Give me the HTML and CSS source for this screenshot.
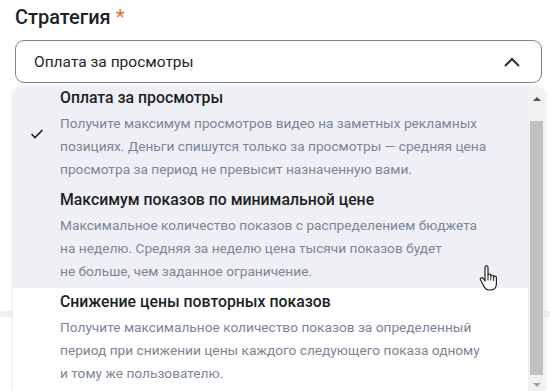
FILE: index.html
```html
<!DOCTYPE html>
<html lang="ru">

<head>
    <meta charset="UTF-8">
    <title>Стратегия</title>
    <link rel="stylesheet" href="styles.css">
</head>

<body>
    <section class="field">
        <h2 class="field-label">Стратегия <span class="required">*</span></h2>
        <div class="select">
            <span class="select-value">Оплата за просмотры</span>
            <svg class="chevron" width="18" height="12" viewBox="0 0 18 12">
                <polyline points="2,10 9,3 16,10" fill="none" stroke="#2b2f36" stroke-width="2" />
            </svg>
        </div>
        <div class="under-bar"></div>
    </section>

    <div class="dropdown">
        <div class="options">
            <div class="option option-selected">
                <div class="option-check">
                    <svg width="14" height="12" viewBox="0 0 14 12">
                        <polyline points="1.5,6 5,9.5 12.5,2" fill="none" stroke="#222" stroke-width="1.6" />
                    </svg>
                </div>
                <div class="option-body">
                    <div class="option-title">Оплата за просмотры</div>
                    <div class="option-desc">Получите максимум просмотров видео на&nbsp;заметных рекламных позициях. Деньги спишутся только за&nbsp;просмотры — средняя цена просмотра за&nbsp;период не&nbsp;превысит назначенную вами.</div>
                </div>
            </div>
            <div class="option option-hover">
                <div class="option-check"></div>
                <div class="option-body">
                    <div class="option-title">Максимум показов по минимальной цене</div>
                    <div class="option-desc">Максимальное количество показов с&nbsp;распределением бюджета на&nbsp;неделю. Средняя за&nbsp;неделю цена тысячи показов будет не&nbsp;больше, чем заданное ограничение.</div>
                </div>
            </div>
            <div class="option">
                <div class="option-check"></div>
                <div class="option-body">
                    <div class="option-title">Снижение цены повторных показов</div>
                    <div class="option-desc">Получите максимальное количество показов за&nbsp;определенный период при снижении цены каждого следующего показа одному и&nbsp;тому&nbsp;же пользователю.</div>
                </div>
            </div>
        </div>
        <div class="scrollbar">
            <span class="arrow arrow-up"></span>
            <div class="thumb"></div>
            <span class="arrow arrow-down"></span>
        </div>
    </div>

    <!-- mouse pointer over the hovered option -->
    <svg class="cursor" width="20" height="26" viewBox="0 0 20 26">
        <path d="M6 2.5c0-1 .7-1.6 1.5-1.6S9 1.5 9 2.5v8c0-.9.6-1.5 1.4-1.5s1.4.6 1.4 1.5v1c0-.9.6-1.5 1.4-1.5s1.4.6 1.4 1.5v1c0-.9.6-1.4 1.4-1.4s1.4.6 1.4 1.4v6.5c0 3.4-2.4 6-5.8 6H10c-2 0-3.3-.9-4.3-2.4L1.6 15c-.5-.8-.3-1.7.4-2.1.7-.4 1.6-.2 2.1.5L6 16V2.5z" fill="#fff" stroke="#222" stroke-width="1.2" stroke-linejoin="round" />
        <path d="M9 10.5v5M11.8 11.5v4M14.6 12.5v3.5" stroke="#222" stroke-width="1" fill="none" />
    </svg>
</body>

</html>
```

FILE: styles.css
```css
body {
    margin: 0;
    font-family: 'Roboto', 'Noto Sans', sans-serif;
    background-color: #fff;
    color: #1f2226;
}

/* Field with label and select */
.field {
    padding: 4px 8px 0 15px;
}

.field-label {
    margin: 0;
    font-size: 20px;
    font-weight: 500;
    line-height: 26px;
    color: #1f2226;
}

.required {
    color: #e27a34;
}

.select {
    display: flex;
    align-items: center;
    justify-content: space-between;
    height: 41px;
    margin-top: 10px;
    padding: 0 20px 0 18px;
    border: 1px solid #7a8494;
    border-radius: 9px;
}

.select-value {
    font-size: 15.5px;
    color: #22262b;
}

.chevron {
    display: block;
}

.under-bar {
    height: 6px;
    margin: 228px -8px 0 -15px;
    background-color: #eef0f5;
}

/* Dropdown list */
.dropdown {
    position: absolute;
    top: 87px;
    left: 13px;
    width: 532px;
    height: 306px;
    display: flex;
    background-color: #fff;
    border-radius: 9px 9px 0 0;
    box-shadow: 0 0 4px rgba(0, 0, 0, 0.12);
    overflow: hidden;
}

.options {
    flex: 1;
}

.option {
    display: flex;
    padding: 0 0 5px;
}

.option-selected,
.option-hover {
    background-color: #eef0f5;
}

.option + .option {
    padding-top: 3px;
}

.option-check {
    width: 47px;
    flex-shrink: 0;
    display: flex;
    align-items: center;
    justify-content: center;
}

.option-body {
    width: 432px;
}

.option-title {
    font-size: 15.8px;
    font-weight: 500;
    line-height: 22px;
    color: #1c1f24;
}

.option-desc {
    margin-top: 3px;
    font-size: 13.7px;
    line-height: 23px;
    color: #7c8596;
}

/* Scrollbar */
.scrollbar {
    width: 17px;
    flex-shrink: 0;
    display: flex;
    flex-direction: column;
    align-items: center;
    background-color: #f1f1f1;
}

.arrow {
    width: 0;
    height: 0;
    border-left: 4px solid transparent;
    border-right: 4px solid transparent;
}

.arrow-up {
    margin: 10px 0 0;
    border-bottom: 4px solid #505050;
}

.arrow-down {
    margin: 8px 0 0;
    border-top: 4px solid #a3a3a3;
}

.thumb {
    width: 13px;
    height: 254px;
    margin-top: 20px;
    background-color: #c1c1c1;
}

.cursor {
    position: absolute;
    top: 265px;
    left: 479px;
}
```
